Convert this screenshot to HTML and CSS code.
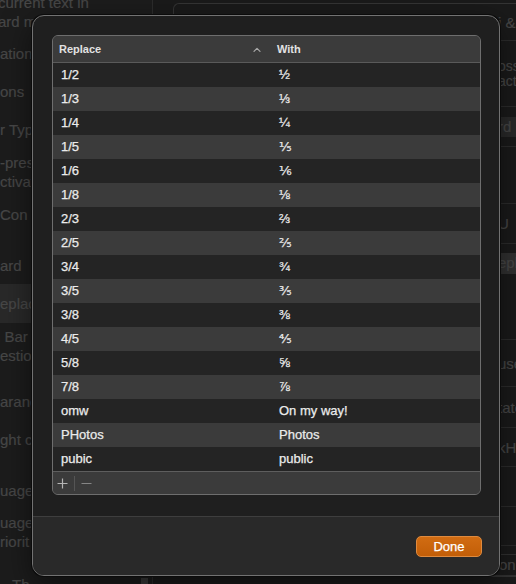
FILE: index.html
```html
<!DOCTYPE html>
<html>
<head>
<meta charset="utf-8">
<link rel="stylesheet" href="styles.css">
</head>
<body>
<div class="window">
  <aside class="sidebar">
    <div class="item first">current text in<br>ard m</div>
    <div class="item m13">ation</div>
    <div class="item m19">ons</div>
    <div class="item m19">r Typ</div>
    <div class="item m14">-pres<br>ctivat</div>
    <div class="item m14">Con</div>
    <div class="item m32">ard</div>
    <div class="item m9 selected">eplac</div>
    <div class="item m4 shift">n Bar<br><span class="unshift">estio</span></div>
    <div class="item m27">aranc</div>
    <div class="item m19">ght c</div>
    <div class="item m32">uage</div>
    <div class="item m13">uage<br>riorit</div>
    <div class="item m25 indent">Th</div>
    <div class="scroll-thumb"></div>
  </aside>
  <main class="content">
    <div class="panel">
      <div class="prow h37"><span class="ptext">i &amp; Bluetooth</span></div>
      <div class="prow h66 two"><span class="ptext">ossible<br>action</span></div>
      <div class="prow h40"><span class="field">rd</span></div>
      <div class="prow h57"></div>
      <div class="prow h40"><span class="ptext">U</span></div>
      <div class="prow h97 top"><span class="field light">eplace</span></div>
      <div class="prow h47"><span class="ptext">use</span></div>
      <div class="prow h41"><span class="ptext">tate</span></div>
      <div class="prow h39"><span class="ptext">kHere</span></div>
      <div class="prow h40"></div>
      <div class="prow h39"></div>
      <div class="prow last"><span class="field outline">on</span></div>
    </div>
  </main>
</div>

<div class="sheet">
  <div class="sheet-body">
    <div class="table">
      <div class="thead">
        <div class="th col1">
          <span>Replace</span>
          <svg class="chev" width="8" height="5" viewBox="0 0 8 5"><path d="M1 4.3 L4 1.3 L7 4.3" fill="none" stroke="#a8a8a8" stroke-width="1.2" stroke-linecap="round" stroke-linejoin="round"/></svg>
        </div>
        <div class="th col2">With</div>
      </div>
      <div class="tbody">
        <div class="tr"><div class="td col1">1/2</div><div class="td col2">½</div></div>
        <div class="tr"><div class="td col1">1/3</div><div class="td col2">⅓</div></div>
        <div class="tr"><div class="td col1">1/4</div><div class="td col2">¼</div></div>
        <div class="tr"><div class="td col1">1/5</div><div class="td col2">⅕</div></div>
        <div class="tr"><div class="td col1">1/6</div><div class="td col2">⅙</div></div>
        <div class="tr"><div class="td col1">1/8</div><div class="td col2">⅛</div></div>
        <div class="tr"><div class="td col1">2/3</div><div class="td col2">⅔</div></div>
        <div class="tr"><div class="td col1">2/5</div><div class="td col2">⅖</div></div>
        <div class="tr"><div class="td col1">3/4</div><div class="td col2">¾</div></div>
        <div class="tr"><div class="td col1">3/5</div><div class="td col2">⅗</div></div>
        <div class="tr"><div class="td col1">3/8</div><div class="td col2">⅜</div></div>
        <div class="tr"><div class="td col1">4/5</div><div class="td col2">⅘</div></div>
        <div class="tr"><div class="td col1">5/8</div><div class="td col2">⅝</div></div>
        <div class="tr"><div class="td col1">7/8</div><div class="td col2">⅞</div></div>
        <div class="tr"><div class="td col1">omw</div><div class="td col2">On my way!</div></div>
        <div class="tr"><div class="td col1">PHotos</div><div class="td col2">Photos</div></div>
        <div class="tr"><div class="td col1">pubic</div><div class="td col2">public</div></div>
      </div>
      <div class="tfoot">
        <button class="tool plus" aria-label="Add">
          <svg width="11" height="11" viewBox="0 0 11 11"><path d="M5.5 0.5 V10.5 M0.5 5.5 H10.5" stroke="#b4b4b4" stroke-width="1.2"/></svg>
        </button>
        <span class="divider"></span>
        <button class="tool minus" aria-label="Remove">
          <svg width="11" height="11" viewBox="0 0 11 11"><path d="M0.5 5.5 H10.5" stroke="#858585" stroke-width="1.2"/></svg>
        </button>
      </div>
    </div>
  </div>
  <div class="sheet-footer">
    <button class="done">Done</button>
  </div>
</div>
</body>
</html>
```

FILE: styles.css
```css
html, body {
  margin: 0;
  padding: 0;
  width: 516px;
  height: 584px;
  overflow: hidden;
  background: #1b1b1b;
  font-family: "Liberation Sans", "DejaVu Sans", Arial, sans-serif;
}

.window {
  display: flex;
  width: 516px;
  height: 584px;
  overflow: hidden;
}

/* background preferences sidebar */
.sidebar {
  position: relative;
  width: 152px;
  flex: none;
  border-right: 1px solid #2c2c2c;
  background: #1c1c1c;
  display: flex;
  flex-direction: column;
  font-size: 15px;
  line-height: 19px;
  color: #474747;
  white-space: nowrap;
  -webkit-text-stroke: 0.2px #474747;
}
.item { padding-left: 0; }
.item.first { margin-top: -7px; margin-left: -2px; }
.item.shift { margin-left: -8px; }
.unshift { margin-left: 8px; }
.item.indent { margin-left: 12px; }
.m4 { margin-top: 4px; }
.m9 { margin-top: 9px; }
.m13 { margin-top: 13px; }
.m14 { margin-top: 14px; }
.m19 { margin-top: 19px; }
.m25 { margin-top: 24px; }
.m27 { margin-top: 27px; }
.m32 { margin-top: 32px; }
.item.selected {
  background: #292929;
  padding: 10px 0;
  margin-left: -4px;
  padding-left: 4px;
}
.scroll-thumb {
  position: absolute;
  left: 141px;
  top: 578px;
  width: 7px;
  height: 20px;
  background: #3a3a3a;
}

/* background content */
.content {
  flex: 1;
  padding: 3px 0 0 20px;
  background: #1a1a1a;
}
.panel {
  width: 380px;
  border: 1px solid #343434;
  border-right: none;
  border-radius: 6px 0 0 0;
  display: flex;
  flex-direction: column;
  font-size: 15px;
  line-height: 19px;
  color: #474747;
  -webkit-text-stroke: 0.2px #474747;
  white-space: nowrap;
}
.prow {
  display: flex;
  align-items: center;
  border-bottom: 1px solid #2c2c2c;
  padding-left: 324px;
}
.prow.two { line-height: 15px; font-size: 14px; }
.prow.top { align-items: flex-start; padding-top: 9px; box-sizing: border-box; }
.prow.last { border-bottom: none; align-items: flex-start; padding-top: 8px; }
.h37 { height: 36px; }
.h66 { height: 65px; }
.h40 { height: 39px; }
.h57 { height: 56px; }
.h97 { height: 96px; }
.h47 { height: 46px; }
.h41 { height: 40px; }
.h39 { height: 38px; }
.field {
  background: #2a2a2a;
  height: 20px;
  line-height: 20px;
  padding-left: 4px;
  margin-left: -4px;
  width: 40px;
}
.field.light { background: #313131; height: 21px; }
.field.outline {
  background: transparent;
  border: 1px solid #323232;
  border-radius: 4px;
  margin-left: -8px;
  padding-left: 8px;
}

/* sheet */
.sheet {
  position: absolute;
  left: 32px;
  top: 15px;
  width: 468px;
  height: 561px;
  box-sizing: border-box;
  border: 1px solid #727272;
  border-radius: 12px;
  background: #1f1f1f;
  box-shadow: 0 0 0 1px #0b0b0b, 0 10px 30px rgba(0,0,0,0.5);
  display: flex;
  flex-direction: column;
  overflow: hidden;
}
.sheet-body {
  height: 500px;
  box-sizing: border-box;
  padding: 19px 0 0 19px;
}
.table {
  width: 429px;
  height: 460px;
  box-sizing: border-box;
  border: 1px solid #6e6e6e;
  border-radius: 6px;
  background: #3b3b3b;
  overflow: hidden;
  display: flex;
  flex-direction: column;
}
.thead {
  display: flex;
  height: 26px;
  border-bottom: 1px solid #5a5a5a;
  background: #3b3b3b;
  flex: none;
}
.th {
  display: flex;
  align-items: center;
  font-size: 11px;
  font-weight: bold;
  color: #e2e2e2;
  padding-left: 6px;
  box-sizing: border-box;
}
.col1 { width: 218px; flex: none; box-sizing: border-box; }
.col2 { flex: 1; }
.th.col1 { justify-content: space-between; padding-right: 10px; }
.chev { display: block; margin-top: 1px; }
.tbody { display: flex; flex-direction: column; flex: none; }
.tr {
  display: flex;
  height: 24px;
  line-height: 24px;
  font-size: 13px;
  color: #ebebeb;
  -webkit-text-stroke: 0.25px #ebebeb;
}
.tr:nth-child(odd) { background: #242424; }
.tr:nth-child(even) { background: #3b3b3b; }
.td { padding-left: 8px; white-space: nowrap; }
.tfoot {
  border-top: 1px solid #5e5e5e;
  height: 22px;
  display: flex;
  align-items: center;
  background: #3b3b3b;
}
.tool {
  border: none;
  background: transparent;
  padding: 0;
  height: 22px;
  display: flex;
  align-items: center;
  justify-content: center;
}
.tool svg { display: block; }
.plus { width: 18px; }
.minus { width: 22px; }
.divider {
  width: 1px;
  height: 15px;
  background: #555555;
  margin-left: 3px;
}

.sheet-footer {
  flex: 1;
  border-top: 1px solid #3e3e3e;
  background: #292929;
  display: flex;
  justify-content: flex-end;
  align-items: flex-start;
  padding: 19px 17px 0 0;
}
.done {
  width: 66px;
  height: 21px;
  box-sizing: border-box;
  border: 1px solid #df8a3e;
  border-radius: 5px;
  background: linear-gradient(#d16c12, #c25e08);
  color: #ffffff;
  font-family: "Liberation Sans", Arial, sans-serif;
  font-size: 13px;
  line-height: 19px;
  padding: 0;
  -webkit-text-stroke: 0.25px #ffffff;
}
```
